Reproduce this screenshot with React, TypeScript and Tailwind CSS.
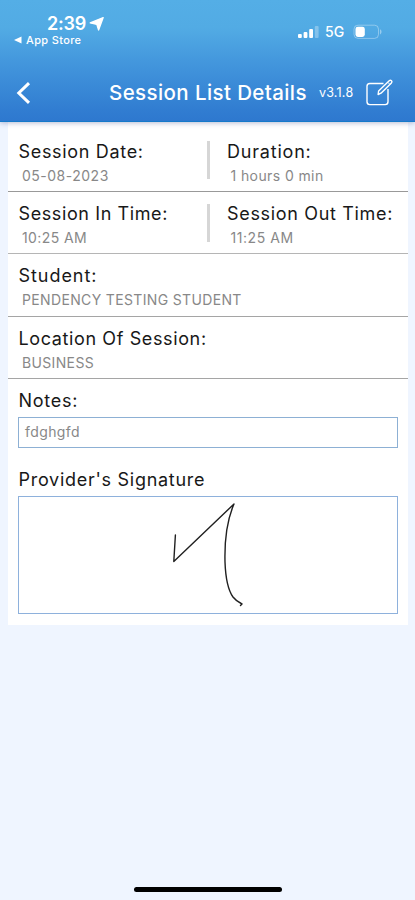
import React from "react";

function Field({ label, value, labelSpacing, valueSpacing }: { label: string; value: string; labelSpacing: string; valueSpacing: string }) {
  return (
    <div className="pl-[10.5px] pt-[10px] whitespace-nowrap">
      <div className={`text-[18px] leading-[24px] text-[#181818] ${labelSpacing}`}>{label}</div>
      <div className={`pl-[3.5px] text-[14px] leading-[23px] text-[#888] ${valueSpacing}`}>{value}</div>
    </div>
  );
}

function StatusBar() {
  return (
    <div className="flex h-[63px] justify-between text-white">
      <div className="pl-[14px] pt-[13px]">
        <div className="flex items-center pl-[33px]">
          <span className="text-[18px] font-semibold leading-[21px] tracking-[-0.2px]">2:39</span>
          <svg className="ml-[3px]" width="16" height="16" viewBox="0 0 16 16" fill="white">
            <path d="M14.2 1.6L9.6 14L7.8 8.4L1.2 6.9Z" stroke="white" strokeWidth="1.3" strokeLinejoin="round" />
          </svg>
        </div>
        <div className="flex items-center">
          <svg width="8" height="8" viewBox="0 0 8 8" fill="white"><path d="M0 4L7.5 0.6V7.4Z" /></svg>
          <span className="ml-[4px] text-[11px] font-medium leading-[12px] tracking-[0.35px]">App Store</span>
        </div>
      </div>
      <div className="flex h-[20px] items-center pr-[33px] mt-[22px]">
        <svg width="21" height="14" viewBox="0 0 21 14" fill="white">
          <rect x="0" y="9" width="3.8" height="4" rx="1" />
          <rect x="5.6" y="7" width="3.8" height="6" rx="1" />
          <rect x="11.2" y="4" width="3.8" height="9" rx="1" />
          <rect x="16.8" y="1" width="3.8" height="12" rx="1" opacity="0.3" />
        </svg>
        <span className="ml-[6px] w-[21px] text-[14px] font-medium leading-[20px]">5G</span>
        <svg className="ml-[7px]" width="29" height="16" viewBox="0 0 29 16" fill="none">
          <rect x="1" y="1.2" width="24.5" height="13.2" rx="4" stroke="white" strokeOpacity="0.35" />
          <rect x="2.5" y="2.7" width="9.3" height="10.2" rx="2.4" fill="white" />
          <path d="M27 5.2C29 6 29 9.5 27 10.4Z" fill="white" fillOpacity="0.4" />
        </svg>
      </div>
    </div>
  );
}

function Header() {
  return (
    <header className="relative z-10 h-[122px] border-b border-[#167aca] bg-[linear-gradient(180deg,#54aee6_0px,#52abe4_28px,#4295dc_65px,#317dd1_110px,#2e78cf_121px)] shadow-[0_1px_5px_rgba(50,60,130,0.35)]">
      <StatusBar />
      <div className="flex h-[60px] items-center text-white">
        <svg className="ml-[16px] mt-[-1px]" width="15" height="24" viewBox="0 0 15 24" fill="none" stroke="white" strokeWidth="3">
          <path d="M13 2.2L2.8 12L13 21.8" />
        </svg>
        <h1 className="ml-[78px] w-[198px] whitespace-nowrap text-[20.5px] font-medium leading-[26px] tracking-[0.4px]">Session List Details</h1>
        <span className="ml-[12px] w-[36px] whitespace-nowrap text-[12.5px] leading-[18px] tracking-[0.2px]">v3.1.8</span>
        <svg className="ml-[10px] mt-[-1px]" width="30" height="30" viewBox="0 0 30 30" fill="none" stroke="white" strokeWidth="1.4" strokeLinejoin="round">
          <path d="M18.5 5.5H4.8Q2 5.5 2 8.3V23.8Q2 26.6 4.8 26.6H20.2Q23 26.6 23 23.8V11" />
          <path d="M13.1 16.5L13.6 13L24.2 2.8Q25.4 1.8 26.5 2.8Q27.5 3.9 26.4 5L16 15.2Z" />
          <path d="M22.7 4.2L25 6.5" strokeWidth="1" />
        </svg>
      </div>
    </header>
  );
}

export default function App() {
  return (
    <div className="flex h-[900px] w-[415px] flex-col overflow-hidden bg-[#eff5ff] font-[Inter,sans-serif]">
      <Header />
      <main className="mx-[8px] h-[503px] w-[400px] bg-white">
        <div className="grid h-[70px] grid-cols-[198.5px_1fr] border-b border-[#999] pt-[8px]">
          <Field label="Session Date:" value="05-08-2023" labelSpacing="tracking-[0.68px]" valueSpacing="tracking-[0.5px]" />
          <div className="flex">
            <div className="mt-[11px] h-[38px] w-[3px] bg-[#d6d6d6]" />
            <div className="-ml-[4px] pl-[11px]"><Field label="Duration:" value="1 hours 0 min" labelSpacing="tracking-[0.8px]" valueSpacing="tracking-[0.4px]" /></div>
          </div>
        </div>
        <div className="grid h-[62px] grid-cols-[198.5px_1fr] border-b-[1.5px] border-[#b5b5b5]">
          <Field label="Session In Time:" value="10:25 AM" labelSpacing="tracking-[0.6px]" valueSpacing="tracking-[0.4px]" />
          <div className="flex">
            <div className="mt-[12px] h-[38px] w-[3px] bg-[#d6d6d6]" />
            <div className="-ml-[4px] pl-[11px]"><Field label="Session Out Time:" value="11:25 AM" labelSpacing="tracking-[0.67px]" valueSpacing="tracking-[0.55px]" /></div>
          </div>
        </div>
        <div className="h-[63px] border-b border-[#a5a5a5]">
          <Field label="Student:" value="PENDENCY TESTING STUDENT" labelSpacing="tracking-[0.95px]" valueSpacing="tracking-[0.35px]" />
        </div>
        <div className="h-[62px] border-b border-[#a5a5a5]">
          <Field label="Location Of Session:" value="BUSINESS" labelSpacing="tracking-[0.62px]" valueSpacing="tracking-[0.35px]" />
        </div>
        <div className="px-[10px] pt-[10px] text-[18px] text-[#181818]">
          <div className="pl-[0.5px] leading-[24px] tracking-[0.75px]">Notes:</div>
          <div className="mt-[4px] h-[31px] border border-[#8db0d4] pl-[6px] text-[14px] leading-[28px] tracking-[0.4px] text-[#888]">fdghgfd</div>
          <div className="mt-[20px] pl-[0.5px] leading-[24px] tracking-[0.72px]">Provider's Signature</div>
          <div className="mt-[4px] h-[118px] border border-[#8eb1dc]">
            <svg width="377" height="116" viewBox="19 497 377 116" fill="none" stroke="#202020" strokeWidth="1.4" strokeLinecap="round" strokeLinejoin="round">
              <path d="M175.4 535L173.8 561.5L234 504C227 520 224.5 542 225 562C225.5 576 228 590 233 597C236 601 239 602.5 242 604L240.5 605.5" />
            </svg>
          </div>
        </div>
      </main>
      <footer className="mt-auto flex justify-center pb-[8px]">
        <div className="h-[5px] w-[148px] rounded-full bg-black" />
      </footer>
    </div>
  );
}
